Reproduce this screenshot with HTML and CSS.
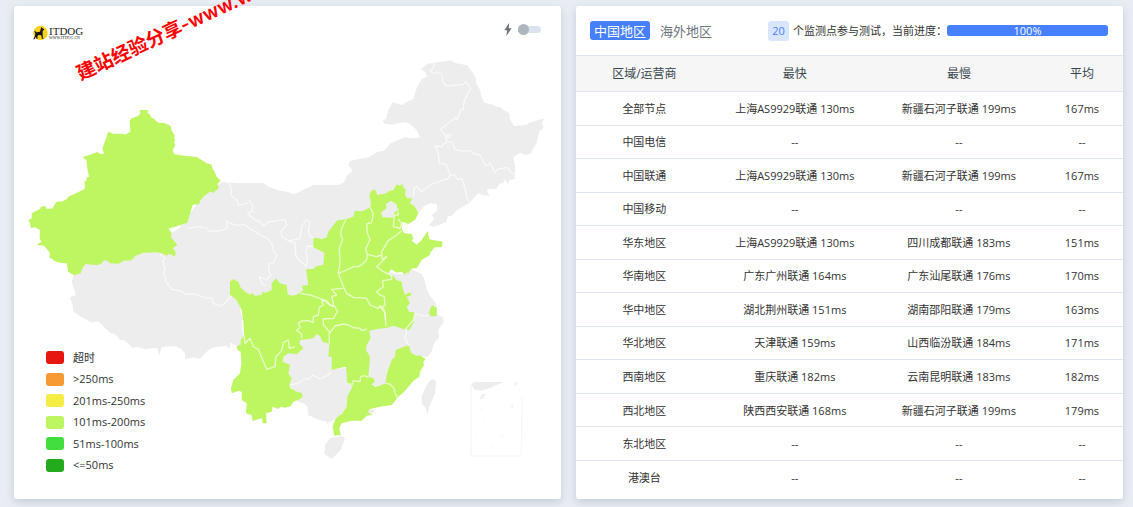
FILE: index.html
```html
<!DOCTYPE html>
<html lang="zh-CN">
<head>
<meta charset="utf-8">
<meta name="viewport" content="width=device-width, initial-scale=1">
<title>ITDOG</title>
<link rel="stylesheet" href="styles.css">
</head>
<body>
<main class="board">
  <section class="card map-card">
    <svg class="map" viewBox="14 6 547 493" aria-hidden="true">
      <!-- provinces without data -->
      <g class="land">
        <g transform="translate(370 50) scale(.33333)">
          <path d="M190,38 215,35 242,31 258,40 275,43 292,46 300,58 310,70 318,85 318,100 330,120 335,140 342,158 362,162 380,170 392,172 400,180 415,187 420,195 418,205 432,228 470,225 478,218 495,213 525,205 515,218 521,233 508,245 500,280 492,290 482,312 465,314 450,308 430,322 435,350 434,387 418,390 415,402 402,388 400,400 390,400 378,417 360,416 350,420 358,438 340,436 325,430 298,458 262,480 245,497 232,500 228,517 190,531 177,525 192,507 186,495 202,480 200,462 182,460 160,470 145,490 0,490 0,320 20,307 42,302 62,280 85,270 105,262 130,265 150,262 140,240 120,222 105,217 85,218 72,224 45,222 38,212 48,206 55,180 68,157 95,165 118,152 130,147 135,130 140,115 155,87 172,80 165,65 152,58 172,42Z"/>
        </g>
        <g transform="translate(200 160) scale(.33333)">
          <path d="M0,120 50,75 65,67 120,70 190,69 205,80 240,92 268,97 282,103 300,95 340,75 415,75 432,67 440,48 458,32 445,15 450,3 510,-10 640,60 640,110 540,140 540,300 300,420 100,400 130,480 0,500 -40,420 -60,200Z"/>
        </g>
        <g transform="translate(60 240) scale(.33333)">
          <path d="M40,105 64,60 300,0 400,-60 640,-60 660,100 540,200 550,300 540,320 512,308 508,328 500,318 470,320 455,325 440,335 420,356 400,352 375,358 375,340 365,328 352,320 330,318 305,322 297,347 292,325 275,325 255,328 230,320 218,324 205,312 190,300 180,300 165,282 150,278 120,250 115,244 95,248 60,228 40,215 38,195 30,172 48,165 35,125Z"/>
        </g>
        <g transform="translate(220 260) scale(.33333)">
          <path d="M500,60 508,35 530,42 555,42 575,28 605,42 612,55 620,85 628,105 648,130 652,165 668,170 672,185 655,210 657,235 645,245 640,255 635,275 622,290 600,290 500,330 498,375 462,378 430,350 430,200 540,180Z"/>
          <path d="M220,245 290,220 340,240 345,325 388,325 400,378 385,420 380,440 355,475 340,480 325,487 326,503 320,485 290,478 265,465 262,440 250,430 235,425 230,400 200,370 200,320 180,305 186,290Z"/>
          <path d="M330,535 355,530 362,527 375,535 362,570 335,597 313,583 315,555Z"/>
          <path d="M640,357 649,365 645,400 628,440 622,465 618,445 606,432 605,410 615,385 628,363Z"/>
          <path d="M692,336h3v3h-3z"/>
        </g>
        <g transform="translate(460 370) scale(.33333)">
          <path d="M33,42 45,36 130,36 95,52 65,62 45,60Z"/>
          <path d="M65,73 77,71 70,86 59,87ZM160,38 172,37 167,50ZM174,64 180,54 178,62ZM155,104 160,104 158,118 154,118ZM152,157 158,145 155,155ZM122,204 132,191 127,203ZM65,158 73,149 70,157ZM48,191 51,198 48,198ZM63,112 66,123 63,123ZM90,231h6v2h-6z" opacity=".8"/>
          <path class="inset" d="M33,42 33,258 184,258 186,80"/>
        </g>
      </g>
      <!-- provinces in the 101-200 ms band -->
      <g class="hit">
        <path transform="translate(0 90) scale(.33333)" d="M420,60 445,60 442,67 450,75 455,83 463,87 470,95 480,99 490,98 507,105 513,112 515,122 525,138 522,145 526,150 522,157 526,165 518,180 522,192 540,196 590,201 605,210 620,220 635,224 637,235 645,248 650,260 662,272 652,283 657,293 640,308 630,305 610,320 600,333 598,342 578,345 562,398 530,409 505,416 515,428 513,441 532,465 518,475 527,485 525,500 508,491 500,497 485,490 468,487 430,488 405,498 398,508 388,512 375,511 355,521 330,520 322,512 312,511 303,521 292,526 257,522 247,535 242,550 222,556 205,545 200,520 180,518 163,513 156,506 148,503 150,488 140,477 132,467 120,466 110,465 124,455 119,445 120,420 105,412 93,414 90,400 85,390 95,385 95,370 120,357 122,351 136,348 140,357 158,355 163,345 170,335 188,334 200,328 205,320 253,298 255,288 253,275 260,272 259,263 267,260 262,235 259,210 248,202 292,186 300,191 312,191 307,177 325,125 340,131 368,131 375,134 391,125 389,92 395,85 415,78 421,70Z"/>
        <path transform="translate(200 160) scale(.33333)" d="M340,235 350,233 365,238 380,232 385,215 410,183 420,180 440,177 460,170 465,152 488,154 510,142 513,130 508,105 515,92 525,88 532,105 560,100 565,94 580,90 590,73 598,77 608,72 610,82 617,90 615,105 622,115 637,115 630,130 643,138 655,160 645,180 625,192 608,185 605,205 612,220 635,222 640,235 636,242 650,254 665,240 675,225 683,213 688,238 728,245 725,262 705,262 690,278 690,285 665,300 650,325 638,325 628,333 625,341 620,337 615,345 605,335 590,338 575,328 565,338 573,347 580,347 590,361 605,365 608,385 615,405 625,398 635,400 632,407 620,410 630,430 620,440 627,455 645,458 640,490 628,510 612,508 580,497 560,503 500,512 400,520 280,480 240,420 290,405 310,390 305,378 325,375 320,340 318,328 340,327 350,318 370,315 373,278 340,262Z"/>
        <g transform="translate(220 260) scale(.33333)">
          <path d="M30,65 40,57 55,65 62,83 75,95 90,104 95,98 105,107 125,105 127,95 137,98 155,90 155,70 168,55 180,70 200,75 203,103 215,107 240,103 258,85 300,60 440,100 500,140 555,200 520,197 500,203 470,205 447,214 452,235 440,255 438,270 450,290 448,315 445,350 460,355 465,365 455,373 465,380 475,378 485,375 497,370 500,340 508,320 515,300 525,290 527,270 560,257 568,257 573,278 590,288 600,286 617,298 610,305 612,315 600,335 598,350 580,362 560,387 545,402 533,412 526,422 515,435 480,440 450,447 447,458 458,464 440,467 425,482 395,482 365,490 358,505 362,525 343,527 338,500 345,480 355,468 365,463 380,440 382,410 398,378 382,370 380,345 378,320 355,325 335,330 335,290 325,290 328,252 308,245 300,228 290,222 280,235 260,238 240,240 238,250 250,265 230,283 205,280 190,290 188,305 210,315 205,340 215,355 208,375 212,385 230,395 245,398 248,410 235,420 220,425 212,438 205,440 195,443 182,440 175,447 158,440 155,455 138,460 140,490 127,490 127,475 115,478 98,483 95,465 78,460 80,430 65,420 65,395 55,393 35,400 33,385 40,360 60,340 64,310 62,275 53,270 50,258 62,255 62,240 72,225 70,185 65,150 48,118 30,104Z"/>
          <path d="M633,140 640,135 643,142 650,142 650,168 633,169 627,158Z"/>
        </g>
      </g>
      <g class="hole">
        <path transform="translate(200 160) scale(.33333)" d="M573,122 590,133 591,142 597,150 585,155 580,165 580,173 547,172 543,157 560,145 558,132Z"/>
        <path transform="translate(220 260) scale(.33333)" d="M444,452 455,447 463,452 458,460 447,460Z"/>
      </g>
      <!-- province boundaries -->
      <g class="line">
        <path transform="translate(370 50) scale(.33333)" d="M190,38 193,48 180,65 195,71 203,66 215,73 220,98 230,108 280,103 287,95 302,115 290,137 282,155 280,178 272,180 262,208 258,202 212,238 230,262 240,262 242,254 232,255 227,263 230,275 248,278 255,298 275,303 300,302 310,310 330,315 345,345 352,347 360,338 375,367 385,357 412,352 422,367 432,372M230,277 220,282 215,290 195,288 205,310 208,340 228,342 240,372 237,384 215,392 180,405 155,425 140,408 132,415 130,440M240,375 255,375 262,388 275,385 285,415 290,440 296,455"/>
        <path transform="translate(200 160) scale(.33333)" d="M85,67 95,90 92,105 112,122 115,135 132,133 150,123 158,135 157,155 142,160 165,180 185,187 190,198 205,186 225,183 255,178 260,195 243,215 245,230 267,243 300,235 305,200 318,180 330,185 325,215 332,230 340,235M267,243 285,250 288,290 300,302 318,318 322,300 318,275 322,258 340,260M-38,204 -22,203 0,200 20,205 25,213 60,213 80,205 80,185 110,197 130,193 160,212 205,238 218,255 220,275 230,285 220,308 208,310 205,330 212,345 200,360 178,350 185,370 200,378M438,178 425,205 422,225 428,238 418,265 420,310 415,340 440,330 460,320 475,320 490,310 500,300 502,283 497,268 510,238 502,220 500,192 515,188 520,160 510,142M502,283 530,290 545,285 545,275 565,242 590,225 605,212M545,285 547,297 560,290 530,320 550,335 575,347 575,358 548,362 550,380 530,395 540,405 553,410 555,435 540,445M415,340 430,380 440,400 460,412 500,415 510,435 535,445 540,437 553,450 557,480M595,155 595,165 583,165 580,200 600,205 605,190 595,178M300,400 330,405 370,420 390,435 400,440 400,428 395,410 410,405 395,388 430,385"/>
        <path transform="translate(60 240) scale(.33333)" d="M300,42 315,55 308,65 315,85 312,100 318,125 335,148 365,153 375,162 400,162 445,175 455,172 460,190 478,198 495,190 503,178 515,168"/>
        <path transform="translate(220 260) scale(.33333)" d="M305,120 310,135 298,142 295,165 280,170 280,188 265,182 245,183 235,190 240,202 230,212 245,222 245,235M305,120 320,122 330,135 345,140 352,155 340,175 310,177 310,195 328,215 328,252M328,220 345,198 370,192 385,195 400,203 420,205 425,212 440,207M485,145 495,160 498,200M72,225 75,250 90,235 100,260 115,268 128,300 140,328 165,320 168,290 185,272 190,248 205,240 208,265 225,260M210,375 235,370 250,358 270,355 277,345 300,357 325,345 335,335M382,370 398,373 400,362 420,365 422,350 435,347 445,352M497,370 510,372 522,385 526,402 532,412M585,160 605,167 625,168M560,210 555,235 568,258M585,160 580,180 555,210"/>
      </g>
    </svg>

    <header class="map-head">
      <a class="logo" href="#" aria-label="ITDOG">
        <svg class="logo-mark" viewBox="0 0 16 16" aria-hidden="true">
          <circle cx="8.500" cy="8" r="7.200" fill="#fcd116"/>
          <path d="M9.400 1.700 10.100 3.100 12.300 4.200 11.900 5.100 10.800 5.400 10.600 8.500 10.900 13H11.500V13.800H9.900L9.300 10.200 6.500 10 5.300 11.600 5.700 13.800H4.500L4 11.500 2.500 14.200H1.300L3 10.700 3.200 8.400 2.400 5.900 3.100 5.700 4.200 7.200 8 6.700 8.700 4Z" fill="#181412"/>
        </svg>
        <span class="logo-text"><span class="logo-name">ITDOG</span><span class="logo-url">WWW.ITDOG.CN</span></span>
      </a>
      <label class="switch">
        <svg class="bolt" viewBox="0 0 8 13" aria-hidden="true"><path d="M5.200 0 .3 7.200H3.200L2.300 13 7.700 5.200H4.700Z" fill="#6c7278"/></svg>
        <input type="checkbox" class="toggle" aria-label="切换">
      </label>
    </header>

    <ul class="legend">
      <li><i class="swatch timeout"></i>超时</li>
      <li><i class="swatch slowest"></i>&gt;250ms</li>
      <li><i class="swatch slow"></i>201ms-250ms</li>
      <li><i class="swatch medium"></i>101ms-200ms</li>
      <li><i class="swatch fast"></i>51ms-100ms</li>
      <li><i class="swatch fastest"></i>&lt;=50ms</li>
    </ul>
    <div class="watermark">建站经验分享-www.w</div>
  </section>

  <section class="card data-card">
    <header class="data-head">
      <nav class="tabs">
        <button type="button" class="tab active">中国地区</button>
        <button type="button" class="tab">海外地区</button>
      </nav>
      <div class="status">
        <span class="count">20</span>
        <span class="status-text">个监测点参与测试，当前进度：</span>
        <div class="progress" role="progressbar" aria-label="当前进度" aria-valuenow="100" aria-valuemin="0" aria-valuemax="100"><div class="bar" style="width:100%">100%</div></div>
      </div>
    </header>
    <table class="results">
      <thead><tr><th class="c-area">区域/运营商</th><th class="c-node">最快</th><th class="c-node">最慢</th><th class="c-avg">平均</th></tr></thead>
      <tbody>
        <tr><td>全部节点</td><td>上海AS9929联通 130ms</td><td>新疆石河子联通 199ms</td><td>167ms</td></tr>
        <tr><td>中国电信</td><td>--</td><td>--</td><td>--</td></tr>
        <tr><td>中国联通</td><td>上海AS9929联通 130ms</td><td>新疆石河子联通 199ms</td><td>167ms</td></tr>
        <tr><td>中国移动</td><td>--</td><td>--</td><td>--</td></tr>
        <tr><td>华东地区</td><td>上海AS9929联通 130ms</td><td>四川成都联通 183ms</td><td>151ms</td></tr>
        <tr><td>华南地区</td><td>广东广州联通 164ms</td><td>广东汕尾联通 176ms</td><td>170ms</td></tr>
        <tr><td>华中地区</td><td>湖北荆州联通 151ms</td><td>湖南邵阳联通 179ms</td><td>163ms</td></tr>
        <tr><td>华北地区</td><td>天津联通 159ms</td><td>山西临汾联通 184ms</td><td>171ms</td></tr>
        <tr><td>西南地区</td><td>重庆联通 182ms</td><td>云南昆明联通 183ms</td><td>182ms</td></tr>
        <tr><td>西北地区</td><td>陕西西安联通 168ms</td><td>新疆石河子联通 199ms</td><td>179ms</td></tr>
        <tr><td>东北地区</td><td>--</td><td>--</td><td>--</td></tr>
        <tr><td>港澳台</td><td>--</td><td>--</td><td>--</td></tr>
      </tbody>
    </table>
  </section>
</main>
</body>
</html>
```
FILE: styles.css
```css
* { box-sizing: border-box; }

body {
  margin: 0;
  background: #e9edf3;
  color: #333;
  font: 11px/16px "Open Sans", "Noto Sans CJK SC", sans-serif;
}

.board {
  display: grid;
  grid-template-columns: 1fr 1fr;
  gap: 15px;
  padding: 6px 10px 8px 14px;
}

.card {
  background: #fff;
  border-radius: 3px;
  box-shadow: 0 3px 8px rgba(100, 120, 150, .28);
}

/* map */
.map-card { position: relative; }
.map { display: block; width: 100%; height: auto; }
.land, .hole { fill: #ededed; }
.hit { fill: #bef662; }
.line {
  fill: none;
  stroke: #fff;
  stroke-opacity: .65;
  stroke-width: 4;
  stroke-linejoin: round;
}
.inset { fill: none; stroke: #f7f7f7; stroke-width: 4; }

.map-head {
  position: absolute;
  top: 16px;
  left: 18px;
  right: 20px;
  display: flex;
  justify-content: space-between;
  align-items: flex-start;
}
.logo {
  display: flex;
  align-items: center;
  gap: 1px;
  margin-top: 3px;
  color: #222;
  text-decoration: none;
  font-family: "Liberation Serif", serif;
}
.logo-mark { width: 16px; height: 16px; }
.logo-text { display: flex; flex-direction: column; }
.logo-name { font-size: 11px; line-height: 10px; }
.logo-url { font-size: 4px; line-height: 4px; }

.switch { display: flex; align-items: center; gap: 6px; height: 15px; }
.bolt { width: 8px; height: 13px; }
.toggle {
  appearance: none;
  display: flex;
  align-items: center;
  width: 23px;
  height: 7px;
  margin: 0;
  border-radius: 4px;
  background: #dbe3ee;
}
.toggle::before {
  content: "";
  width: 11px;
  height: 11px;
  flex: none;
  border-radius: 50%;
  background: #adb5bd;
}
.toggle:checked { justify-content: flex-end; }

.legend {
  position: absolute;
  left: 32px;
  bottom: 27px;
  display: flex;
  flex-direction: column;
  justify-content: space-between;
  height: 121px;
  margin: 0;
  padding: 0;
  list-style: none;
}
.legend li { display: flex; align-items: center; gap: 9px; height: 13px; }
.swatch { width: 18px; height: 13px; border-radius: 3px; }
.timeout { background: #e61610; }
.slowest { background: #f79a33; }
.slow { background: #f5ed43; }
.medium { background: #bef662; }
.fast { background: #42dd3f; }
.fastest { background: #24aa1d; }

.watermark {
  position: absolute;
  top: 59px;
  left: 64px;
  color: #f00;
  font-family: Inter, "Noto Sans CJK SC", sans-serif;
  font-size: 19px;
  font-weight: 600;
  line-height: 20px;
  white-space: nowrap;
  transform: rotate(-25deg);
  transform-origin: 0 50%;
  pointer-events: none;
}

/* results */
.data-card {
  display: flex;
  flex-direction: column;
  padding-bottom: 5px;
}
.data-head {
  display: flex;
  align-items: center;
  justify-content: space-between;
  height: 49px;
  padding: 0 15px 0 14px;
}
.tabs { display: flex; gap: 6px; }
.tab {
  height: 19px;
  padding: 0 4px;
  border: 0;
  border-radius: 3px;
  background: none;
  color: #6c757d;
  font: 13px/18px "Open Sans", "Noto Sans CJK SC", sans-serif;
}
.tab.active { background: #4680ff; color: #fff; }
.status { display: flex; align-items: center; }
.count {
  width: 21px;
  margin-right: 4px;
  border-radius: 3px;
  background: #dae6ff;
  color: #4680ff;
  line-height: 20px;
  text-align: center;
}
.status-text { white-space: nowrap; }
.progress {
  width: 161px;
  height: 11px;
  border-radius: 3px;
  background: #e9ecef;
}
.bar {
  height: 11px;
  border-radius: 3px;
  background: #4680ff;
  color: #fff;
  line-height: 11px;
  text-align: center;
}

.results {
  flex: 1;
  width: 100%;
  table-layout: fixed;
  border-collapse: collapse;
}
.results th, .results td {
  padding: 0;
  border-top: 1px solid #dfe5ec;
  text-align: center;
}
.results th {
  height: 36px;
  background: #f6f6f6;
  color: #37474f;
  font-size: 12px;
  font-weight: 400;
}
.results td { height: 33px; padding-top: 1px; }
.c-area { width: 25%; }
.c-node { width: 30%; }
.c-avg { width: 15%; }
```
